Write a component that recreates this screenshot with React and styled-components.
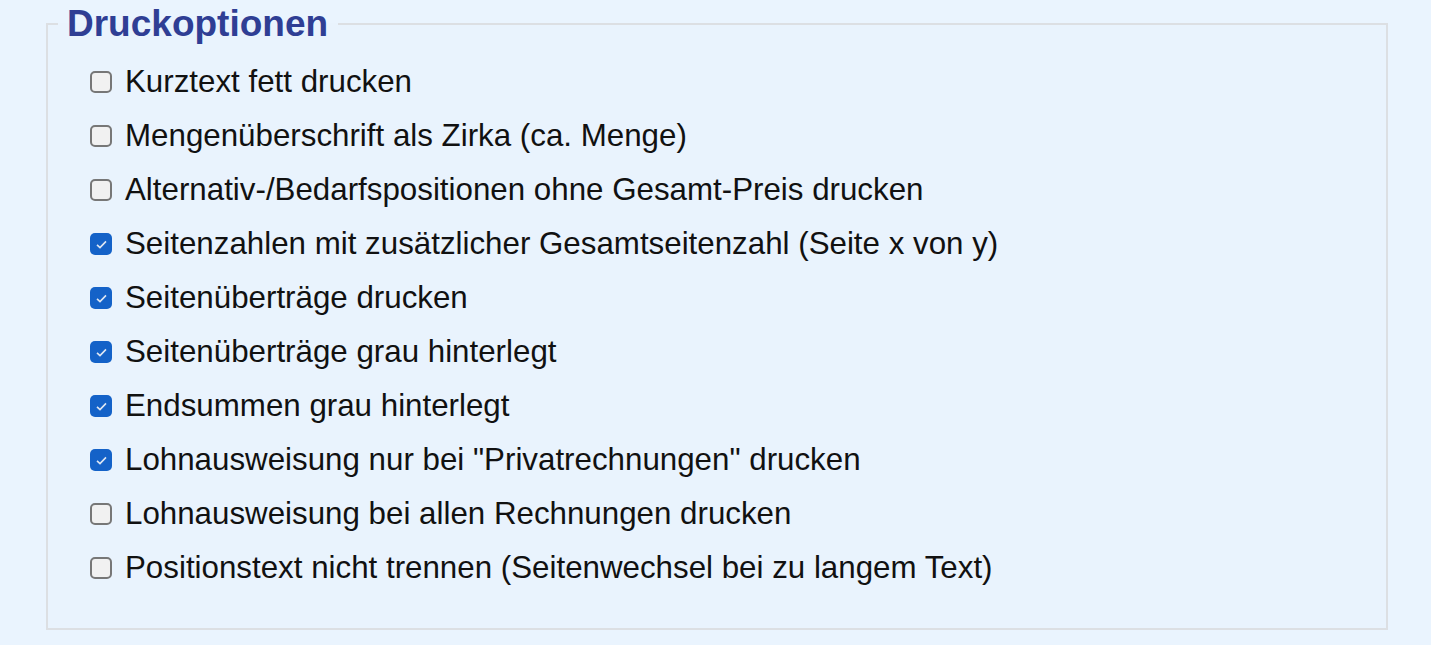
import React from "react";
import styled, { createGlobalStyle } from "styled-components";

const Global = createGlobalStyle`
  html, body { margin: 0; padding: 0; background: #eaf4fe; }
  body { font-family: "Liberation Sans", Arial, sans-serif; }
`;

const Page = styled.div`
  padding: 3px 43px 0 46px;
`;

const Fieldset = styled.fieldset`
  margin: 0;
  padding: 10px 0 33px 0;
  border: 2px solid #dcdfe3;
  background: #e9f3fd;
  min-width: 0;
`;

const Legend = styled.legend`
  padding: 0 10px 0 9px;
  margin-left: 10px;
  font-size: 37px;
  font-weight: bold;
  color: #2f3e94;
  line-height: 42px;
`;

const List = styled.div`
  display: flex;
  flex-direction: column;
  padding-left: 42px;
`;

const Row = styled.label`
  display: flex;
  align-items: center;
  height: 54px;
  gap: 13px;
  font-size: 31.3px;
  color: #111;
`;

const Box = styled.span`
  flex: none;
  width: 22px;
  height: 22px;
  border-radius: 5px;
  box-sizing: border-box;
  display: flex;
  align-items: center;
  justify-content: center;
  border: ${(p) => (p.$checked ? "none" : "2px solid #777")};
  background: ${(p) => (p.$checked ? "#1462c8" : "#f1f1f1")};
`;

const items = [
  ["Kurztext fett drucken", false],
  ["Mengenüberschrift als Zirka (ca. Menge)", false],
  ["Alternativ-/Bedarfspositionen ohne Gesamt-Preis drucken", false],
  ["Seitenzahlen mit zusätzlicher Gesamtseitenzahl (Seite x von y)", true],
  ["Seitenüberträge drucken", true],
  ["Seitenüberträge grau hinterlegt", true],
  ["Endsummen grau hinterlegt", true],
  ['Lohnausweisung nur bei "Privatrechnungen" drucken', true],
  ["Lohnausweisung bei allen Rechnungen drucken", false],
  ["Positionstext nicht trennen (Seitenwechsel bei zu langem Text)", false],
];

export default function App() {
  return (
    <>
      <Global />
      <Page>
        <Fieldset>
          <Legend>Druckoptionen</Legend>
          <List>
            {items.map(([t, c]) => (
              <Row key={t}>
                <Box $checked={c}>
                  {c && (
                    <svg width="13" height="11" viewBox="0 0 13 11">
                      <path d="M2 5.8 L5 8.6 L11 2.4" fill="none" stroke="#dfe7f3" strokeWidth="1.6" />
                    </svg>
                  )}
                </Box>
                <span>{t}</span>
              </Row>
            ))}
          </List>
        </Fieldset>
      </Page>
    </>
  );
}
